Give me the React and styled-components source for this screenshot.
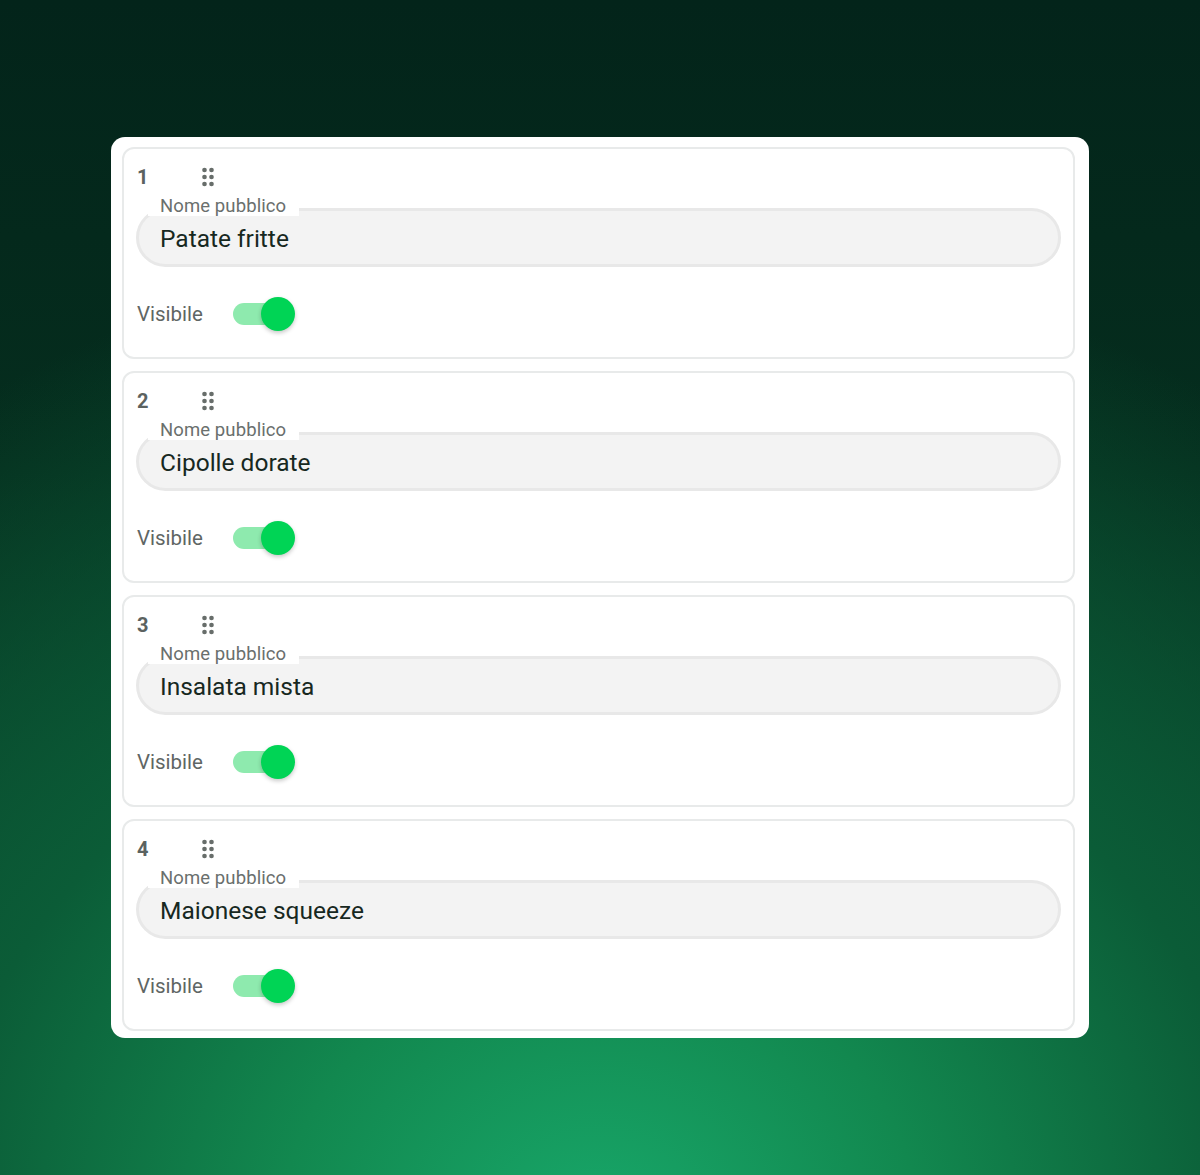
import React, { useState } from 'react';
import styled, { createGlobalStyle } from 'styled-components';

const GlobalStyle = createGlobalStyle`
  html, body {
    margin: 0;
    padding: 0;
    height: 100%;
  }
  body {
    font-family: Roboto, "Noto Sans", Arial, sans-serif;
  }
  #root {
    min-height: 100%;
  }
`;

const DragIcon = () => (
  <svg width="28" height="28" viewBox="0 0 24 24" fill="#676d6a">
    <circle cx="9" cy="6" r="2" />
    <circle cx="15" cy="6" r="2" />
    <circle cx="9" cy="12" r="2" />
    <circle cx="15" cy="12" r="2" />
    <circle cx="9" cy="18" r="2" />
    <circle cx="15" cy="18" r="2" />
  </svg>
);

const App = () => {
  const [items, setItems] = useState([
    { id: 1, name: 'Patate fritte', visible: true },
    { id: 2, name: 'Cipolle dorate', visible: true },
    { id: 3, name: 'Insalata mista', visible: true },
    { id: 4, name: 'Maionese squeeze', visible: true },
  ]);

  const toggle = (id) => {
    setItems((prev) =>
      prev.map((it) => (it.id === id ? { ...it, visible: !it.visible } : it))
    );
  };

  const rename = (id, value) => {
    setItems((prev) =>
      prev.map((it) => (it.id === id ? { ...it, name: value } : it))
    );
  };

  return (
    <>
      <GlobalStyle />
      <Page>
        <Panel>
          {items.map((item, index) => (
            <Card key={item.id}>
              <HeaderRow>
                <Index>{index + 1}</Index>
                <DragIcon />
              </HeaderRow>
              <Field>
                <FieldLabel>Nome pubblico</FieldLabel>
                <FieldInput
                  value={item.name}
                  onChange={(e) => rename(item.id, e.target.value)}
                />
              </Field>
              <ToggleRow>
                <ToggleLabel>Visibile</ToggleLabel>
                <Switch $on={item.visible} onClick={() => toggle(item.id)}>
                  <Thumb $on={item.visible} />
                </Switch>
              </ToggleRow>
            </Card>
          ))}
        </Panel>
      </Page>
    </>
  );
};

const Page = styled.div`
  min-height: 100vh;
  display: flex;
  align-items: center;
  justify-content: center;
  background:
    radial-gradient(ellipse 95% 85% at 50% 105%, #18a86a 0%, #12884f 28%, #0b5c37 58%, rgba(4, 40, 27, 0) 100%),
    linear-gradient(180deg, #03241a 0%, #052e1e 40%, #0a4d30 100%);
`;

const Panel = styled.div`
  width: 978px;
  box-sizing: border-box;
  background: #fff;
  border-radius: 14px;
  padding: 10px 14px 7px 11px;
  display: flex;
  flex-direction: column;
  gap: 12px;
`;

const Card = styled.div`
  box-sizing: border-box;
  height: 212px;
  border: 2px solid #e8eaea;
  border-radius: 12px;
  padding: 14px 12px 0;
`;

const HeaderRow = styled.div`
  display: flex;
  align-items: center;
  padding-left: 1px;
  height: 28px;
`;

const Index = styled.span`
  width: 57px;
  font-size: 20px;
  font-weight: 700;
  color: #5b6260;
`;

const Field = styled.div`
  position: relative;
  margin-top: 17px;
`;

const FieldLabel = styled.span`
  position: absolute;
  left: 12px;
  top: -12px;
  padding: 0 13px 0 12px;
  background: #fff;
  font-size: 18.5px;
  line-height: 20px;
  letter-spacing: 0.1px;
  color: #6a6f6d;
`;

const FieldInput = styled.input`
  display: block;
  width: 100%;
  box-sizing: border-box;
  height: 59px;
  border: 3px solid #e8e8e8;
  border-radius: 30px;
  background: #f3f3f3;
  padding: 2px 21px 0;
  font-family: Roboto, "Noto Sans", Arial, sans-serif;
  font-size: 24.5px;
  color: #17281f;
  outline: none;
`;

const ToggleRow = styled.div`
  display: flex;
  align-items: center;
  gap: 30px;
  margin-top: 30px;
  padding-left: 1px;
  height: 34px;
`;

const ToggleLabel = styled.span`
  font-size: 20.5px;
  color: #5f6664;
`;

const Switch = styled.button`
  position: relative;
  width: 62px;
  height: 34px;
  padding: 0;
  border: none;
  background: transparent;
  cursor: pointer;

  &::before {
    content: '';
    position: absolute;
    left: 0;
    top: 6px;
    width: 52px;
    height: 22px;
    border-radius: 11px;
    background: ${(p) => (p.$on ? '#8eeaae' : '#c9cccb')};
  }
`;

const Thumb = styled.span`
  position: absolute;
  top: 0;
  left: ${(p) => (p.$on ? '28px' : '0')};
  width: 34px;
  height: 34px;
  border-radius: 50%;
  background: ${(p) => (p.$on ? '#00d455' : '#f5f5f5')};
  box-shadow: 0 2px 4px rgba(0, 0, 0, 0.22);
`;

export default App;
